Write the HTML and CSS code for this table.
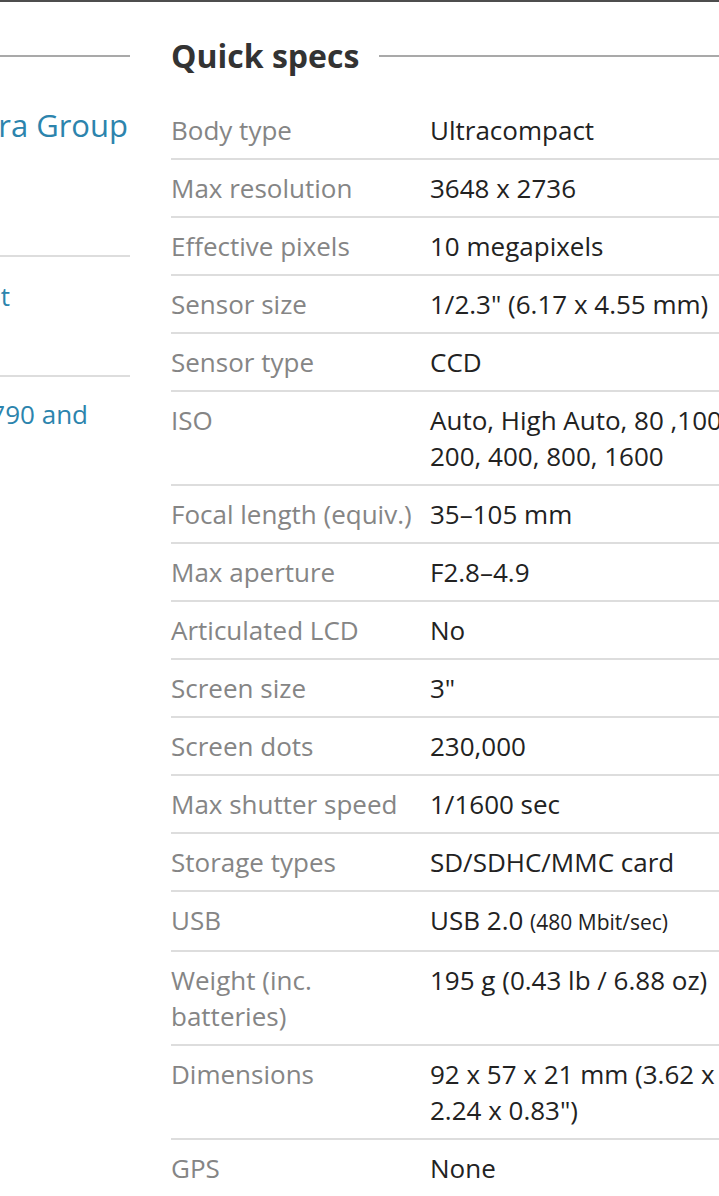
FILE: index.html
```html
<!DOCTYPE html>
<html>
  <head>
    <title>Quick specs</title>
    <link rel="stylesheet" href="styles.css">
  </head>
  <body>
    <div class="top-bar"></div>
    <div class="page">
      <aside class="sidebar">
        <div class="side-rule"></div>
        <div class="side-item side-item-first">
          <a class="side-link side-link-big" href="#">Canon Camera Group</a>
        </div>
        <div class="side-item side-item-short">
          <a class="side-link" href="#">Announcement</a>
        </div>
        <div class="side-item side-item-last">
          <a class="side-link" href="#">SD790 and</a>
        </div>
      </aside>

      <main class="specs">
        <h2 class="specs-title">Quick specs</h2>
        <table class="spec-table">
          <tr><th>Body type</th><td>Ultracompact</td></tr>
          <tr><th>Max resolution</th><td>3648 x 2736</td></tr>
          <tr><th>Effective pixels</th><td>10 megapixels</td></tr>
          <tr><th>Sensor size</th><td>1/2.3" (6.17 x 4.55 mm)</td></tr>
          <tr><th>Sensor type</th><td>CCD</td></tr>
          <tr><th>ISO</th><td>Auto, High Auto, 80 ,100, 200, 400, 800, 1600</td></tr>
          <tr><th>Focal length (equiv.)</th><td>35–105 mm</td></tr>
          <tr><th>Max aperture</th><td>F2.8–4.9</td></tr>
          <tr><th>Articulated LCD</th><td>No</td></tr>
          <tr><th>Screen size</th><td>3"</td></tr>
          <tr><th>Screen dots</th><td>230,000</td></tr>
          <tr><th>Max shutter speed</th><td>1/1600 sec</td></tr>
          <tr><th>Storage types</th><td>SD/SDHC/MMC card</td></tr>
          <tr><th>USB</th><td>USB 2.0 <span class="note">(480 Mbit/sec)</span></td></tr>
          <tr><th>Weight (inc. batteries)</th><td>195 g (0.43 lb / 6.88 oz)</td></tr>
          <tr><th>Dimensions</th><td>92 x 57 x 21 mm (3.62 x 2.24 x 0.83")</td></tr>
          <tr><th>GPS</th><td>None</td></tr>
        </table>
      </main>
    </div>
  </body>
</html>
```

FILE: styles.css
```css
html,
body {
  overflow: hidden;
}

body {
  margin: 0;
  background-color: #ffffff;
  font-family: "Open Sans", "Liberation Sans", sans-serif;
  color: #222222;
}

.top-bar {
  height: 2px;
  background-color: #4d4d4d;
}

.page {
  display: flex;
  align-items: flex-start;
}

.sidebar {
  width: 130px;
  flex-shrink: 0;
  padding-top: 53px;
}

.side-rule {
  height: 2px;
  background-color: #a9a9a9;
}

.side-item {
  display: flex;
  justify-content: flex-end;
  overflow: hidden;
  border-bottom: 2px solid #dddddd;
  font-size: 26px;
  line-height: 36px;
}

.side-item-first {
  padding: 50px 2px 112px 0;
}

.side-item-short {
  padding: 21px 120px 61px 0;
}

.side-item-last {
  padding: 19px 42px 0 0;
  border-bottom: none;
}

.side-link {
  flex-shrink: 0;
  white-space: nowrap;
  color: #2c84ad;
  text-decoration: none;
}

.side-link-big {
  font-size: 31px;
}

.specs {
  width: 569px;
  flex-shrink: 0;
  margin-left: 41px;
}

.specs-title {
  display: flex;
  align-items: center;
  margin: 34px 0 26px;
  font-size: 32px;
  line-height: 40px;
  font-weight: 700;
  color: #333333;
}

.specs-title::after {
  content: "";
  flex: 1;
  height: 2px;
  margin-left: 20px;
  background-color: #a9a9a9;
}

.spec-table {
  width: 100%;
  border-collapse: collapse;
  font-size: 26px;
  line-height: 36px;
}

.spec-table th,
.spec-table td {
  padding: 10px 0;
  border-bottom: 2px solid #dddddd;
  text-align: left;
  vertical-align: top;
  font-weight: 400;
}

.spec-table th {
  width: 242px;
  padding-right: 17px;
  color: #858585;
}

.spec-table td {
  color: #222222;
}

.note {
  font-size: 21px;
}
```
